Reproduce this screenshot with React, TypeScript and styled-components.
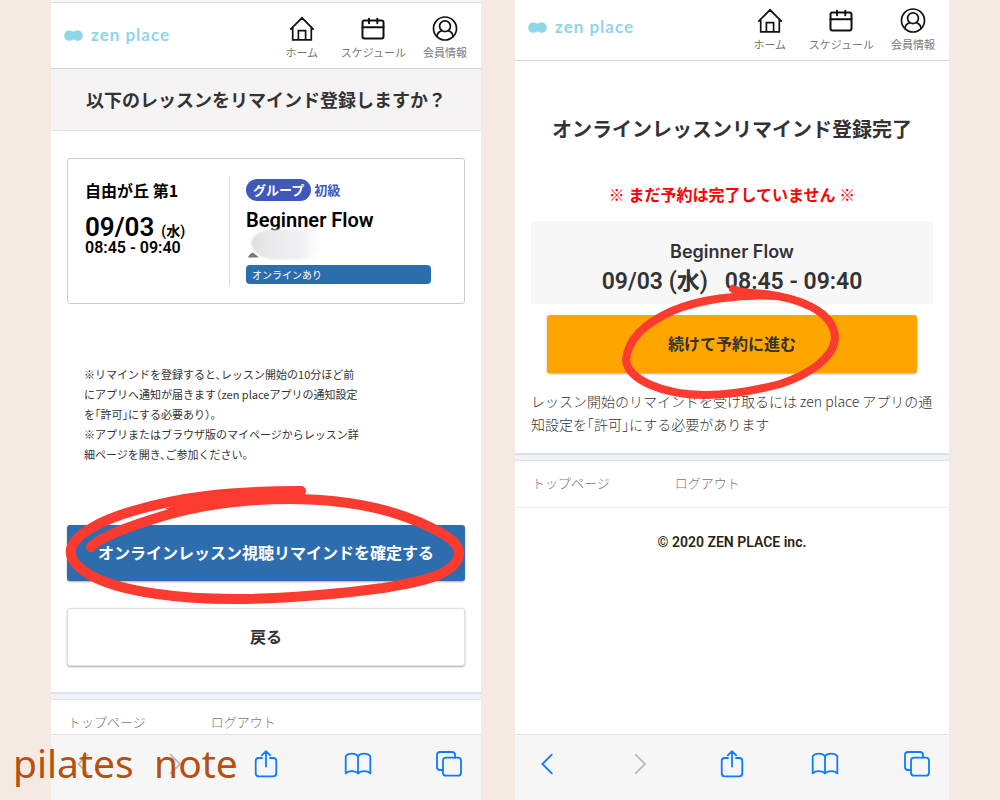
import React from "react";
import styled, { createGlobalStyle } from "styled-components";

const jp = `"Noto Sans CJK JP", sans-serif`;
const latin = `Roboto, "Noto Sans CJK JP", sans-serif`;

const GlobalStyle = createGlobalStyle`
  *, *::before, *::after { box-sizing: border-box; }
  body { margin: 0; background: #f5e9e4; color: #333; font-family: ${jp}; }
  h1, p { margin: 0; }
  a { color: inherit; text-decoration: none; }
  button { font: inherit; cursor: pointer; }
`;

const Page = styled.main`
  position: relative;
  display: grid;
  grid-template-columns: 430fr 434fr;
  gap: 34px;
  min-height: 100vh;
  padding: 0 51px;
`;

const Phone = styled.section`
  display: flex;
  flex-direction: column;
  min-width: 0;
  background: #fff;
`;

const StatusEdge = styled.div`
  height: 3px;
  background: #f7f7f7;
  border-bottom: 1px solid #dcdcdc;
`;

const Header = styled.header<{ $top: number }>`
  display: flex;
  align-items: center;
  justify-content: space-between;
  padding: ${(p) => p.$top}px 14px 8px 13px;
  border-bottom: 1px solid #d3d3d3;
`;

const Logo = styled.a`
  display: flex;
  align-items: center;
  gap: 8px;
  margin-bottom: 6px;
  color: #8fd6e9;
  font: 700 17px/20px Lato, sans-serif;
  letter-spacing: 1px;
`;

const HeaderNav = styled.nav`
  display: flex;
  gap: 17px;
`;

const HeaderLink = styled.a`
  display: flex;
  flex-direction: column;
  align-items: center;
  gap: 2px;
  min-width: 44px;
  color: #777;
  font-size: 11px;
  line-height: 16px;
  white-space: nowrap;
  svg { color: #111; }
`;

const TitleBar = styled.h1`
  padding: 15px 0 16px;
  background: #f5f3f4;
  border-bottom: 1px solid #e1e1ea;
  font-size: 18px;
  line-height: 30px;
  font-weight: 700;
  text-align: center;
  white-space: nowrap;
`;

const Body = styled.div<{ $top: number; $bottom: number }>`
  display: flex;
  flex-direction: column;
  padding: ${(p) => p.$top}px 16px ${(p) => p.$bottom}px;
`;

const Card = styled.article`
  display: grid;
  grid-template-columns: 145px 1fr;
  padding: 17px 33px 17px 17px;
  border: 1px solid #ccc;
  border-radius: 3px;
  color: #000;
`;

const When = styled.div`
  height: 110px;
  border-right: 1px solid #ddd;
  font-family: ${latin};
`;

const Studio = styled.p`
  font: 700 16px/28px ${jp};
`;

const DateLine = styled.p`
  display: flex;
  align-items: flex-end;
  gap: 7px;
  margin-top: 10px;
  font-size: 26px;
  line-height: 26px;
  font-weight: 600;
  small { font-size: 14px; line-height: 18px; }
`;

const TimeLine = styled.p`
  font-size: 16px;
  line-height: 16px;
  font-weight: 600;
`;

const What = styled.div`
  padding: 3px 0 2px 16px;
`;

const Tags = styled.div`
  display: flex;
  align-items: center;
  gap: 3px;
  color: #4058bc;
  font-size: 13px;
  line-height: 22px;
  font-weight: 700;
`;

const Pill = styled.span`
  padding: 0 7px;
  border-radius: 11px;
  background: #4058bc;
  color: #fff;
`;

const LessonName = styled.p`
  margin-top: 5px;
  font: 600 20px/28px ${latin};
`;

const Smudge = styled.svg`
  position: relative;
  display: block;
  margin: -6px 0 3px;
`;

const OnlineBadge = styled.p`
  padding: 0 6px;
  border-radius: 4px;
  background: #2e6dad;
  color: #fff;
  font-size: 10px;
  line-height: 19px;
`;

const Note = styled.p`
  margin: 60px 17px 61px;
  font-size: 11px;
  line-height: 20px;
  font-feature-settings: "halt";
  white-space: nowrap;
`;

const Marked = styled.div<{ $gap: number; $inset: number }>`
  position: relative;
  margin: ${(p) => p.$gap}px ${(p) => p.$inset}px 0;
`;

const tones = {
  primary: "background: #2e6dad; color: #fff; border: 0;",
  plain: "background: #fff; color: #333; border: 1px solid #e2e0dc;",
  accent: "background: #ffa500; color: #333; border: 0;",
};

const Action = styled.button<{ $tone: keyof typeof tones; $gap?: number }>`
  display: block;
  width: 100%;
  margin-top: ${(p) => p.$gap ?? 0}px;
  padding: 15px 0 17px;
  border-radius: 3px;
  box-shadow: 0 1px 2px rgba(60, 50, 30, 0.4);
  ${(p) => tones[p.$tone]}
  && { font-size: 16px; line-height: ${(p) => (p.$tone === "accent" ? 26 : 24)}px; font-weight: 700; }
`;

const WideScribble = styled.svg`
  position: absolute;
  left: -7px;
  top: -45px;
  width: calc(100% + 14px);
  height: 130px;
  pointer-events: none;
`;

const RoundScribble = styled.svg`
  position: absolute;
  left: calc(50% - 110px);
  top: -33px;
  width: 220px;
  height: 120px;
  pointer-events: none;
`;

const DoneTitle = styled.h1`
  font-size: 20px;
  line-height: 30px;
  font-weight: 700;
  text-align: center;
  white-space: nowrap;
`;

const Warning = styled.p`
  margin-top: 38px;
  color: #f00;
  font-size: 16px;
  line-height: 24px;
  font-weight: 700;
  text-align: center;
`;

const Summary = styled.div`
  margin-top: 15px;
  padding: 19px 0 4px;
  background: #f7f7f7;
  text-align: center;
`;

const SummaryName = styled.p`
  font: 600 18px/24px Inter, sans-serif;
`;

const SummaryDate = styled.p`
  height: 36px;
  font: 600 23px/36px ${latin};
  white-space: pre;
`;

const Hint = styled.p`
  margin-top: 17px;
  font-size: 14px;
  line-height: 23px;
  font-weight: 300;
  font-feature-settings: "halt";
  white-space: nowrap;
`;

const Band = styled.div`
  height: 8px;
  background: #eff3f8;
  border-top: 2px solid #dde1ea;
  border-bottom: 1px solid #e2e2dc;
`;

const FooterNav = styled.nav<{ $bottom: number; $line?: boolean }>`
  display: flex;
  gap: 65px;
  padding: 12px 17px ${(p) => p.$bottom}px;
  border-bottom: ${(p) => (p.$line ? "1px solid #eee" : "0")};
  color: #777;
  font-size: 13px;
  line-height: 20px;
  font-weight: 300;
`;

const Copyright = styled.p`
  padding: 24px 0;
  color: #2c1f10;
  font: 600 14px/20px ${latin};
  text-align: center;
`;

const Toolbar = styled.nav`
  display: flex;
  justify-content: space-between;
  margin-top: auto;
  padding: 13px 16px 20px;
  background: #f6f6f6;
  border-top: 1px solid #e2e2e2;
`;

const ToolButton = styled.button`
  display: block;
  width: 32px;
  height: 32px;
  padding: 0;
  border: 0;
  background: none;
  color: #0f7bff;
  &:disabled { color: #bbb; }
  svg { display: block; }
`;

const Watermark = styled.p`
  position: absolute;
  left: 13px;
  bottom: 10px;
  color: #b5500f;
  font: 400 39px/54px "Noto Sans", sans-serif;
  white-space: pre;
`;

const NavIcon = ({ children, width = 1.7 }: { children: React.ReactNode; width?: number }) => (
  <svg width="26" height="26" viewBox="0 0 26 26" fill="none" stroke="currentColor" strokeWidth={width} strokeLinecap="round" strokeLinejoin="round" aria-hidden="true">
    {children}
  </svg>
);

const BarIcon = ({ children }: { children: React.ReactNode }) => (
  <svg width="32" height="32" viewBox="0 0 32 32" fill="none" stroke="currentColor" strokeWidth="1.8" strokeLinecap="round" strokeLinejoin="round" aria-hidden="true">
    {children}
  </svg>
);

function SiteHeader({ top }: { top: number }) {
  return (
    <Header $top={top}>
      <Logo href="#">
        <svg width="19" height="11" viewBox="0 0 19 11" fill="currentColor" aria-hidden="true">
          <circle cx="5.4" cy="5.5" r="5.2" />
          <circle cx="13.6" cy="5.5" r="5.2" />
          <rect x="6" y="1.6" width="7" height="7.8" />
        </svg>
        zen place
      </Logo>
      <HeaderNav>
        <HeaderLink href="#">
          <NavIcon>
            <path d="M1.8 13.2 13 1.8l11.2 11.4M3.7 11.4v12.4h18.6V11.4M9.4 23.8v-9.1h7.2v9.1" strokeLinejoin="miter" />
          </NavIcon>
          ホーム
        </HeaderLink>
        <HeaderLink href="#">
          <NavIcon width={2}>
            <rect x="2.5" y="4.6" width="21" height="17.9" rx="2" />
            <path d="M2.5 11.2h21M9 2.8v4.4M17.3 2.8v4.4" />
          </NavIcon>
          スケジュール
        </HeaderLink>
        <HeaderLink href="#">
          <NavIcon>
            <circle cx="13" cy="12.5" r="11.5" />
            <circle cx="13" cy="10.2" r="5.4" />
            <path d="M4.9 20.4c.4-3 2.3-5 5-5.8M21.1 20.4c-.4-3-2.3-5-5-5.8" />
          </NavIcon>
          会員情報
        </HeaderLink>
      </HeaderNav>
    </Header>
  );
}

function SiteFooter({ bottom, line }: { bottom: number; line?: boolean }) {
  return (
    <>
      <Band />
      <FooterNav $bottom={bottom} $line={line}>
        <a href="#">トップページ</a>
        <a href="#">ログアウト</a>
      </FooterNav>
    </>
  );
}

function BrowserBar({ canGoBack }: { canGoBack?: boolean }) {
  return (
    <Toolbar>
      <ToolButton aria-label="戻る" disabled={!canGoBack}>
        <BarIcon><path d="M20.8 6.6 11.4 16l9.4 9.4" /></BarIcon>
      </ToolButton>
      <ToolButton aria-label="進む" disabled>
        <BarIcon><path d="M11.6 6.6 21 16l-9.4 9.4" /></BarIcon>
      </ToolButton>
      <ToolButton aria-label="共有">
        <BarIcon>
          <path d="M12 10H8.7a3 3 0 0 0-3 3v12.300a3 3 0 0 0 3 3h14.600a3 3 0 0 0 3-3V13a3 3 0 0 0-3-3H20M16 18.500V3.300M11.800 7.300 16 3.100l4.200 4.200" />
        </BarIcon>
      </ToolButton>
      <ToolButton aria-label="ブックマーク">
        <BarIcon>
          <path d="M16 8.300C14.800 6.400 12.400 5.600 9.800 5.600S4.900 6.500 3.700 8.300V25.300C5.200 23.900 7.400 23.200 9.800 23.200s4.900.7 6.200 2.300c1.300-1.600 3.700-2.300 6.200-2.300s4.600.7 6.100 2.100V8.300C27.100 6.500 24.800 5.600 22.200 5.600S17.200 6.400 16 8.300v17" />
        </BarIcon>
      </ToolButton>
      <ToolButton aria-label="タブ">
        <BarIcon>
          <rect x="10" y="9.700" width="18" height="18" rx="3" />
          <path d="M10 22H7a3 3 0 0 1-3-3V7a3 3 0 0 1 3-3h12a3 3 0 0 1 3 3v2.500" />
        </BarIcon>
      </ToolButton>
    </Toolbar>
  );
}

export default function App() {
  return (
    <>
      <GlobalStyle />
      <Page>
        <Phone>
          <StatusEdge />
          <SiteHeader top={13} />
          <TitleBar>以下のレッスンをリマインド登録しますか？</TitleBar>
          <Body $top={27} $bottom={26}>
            <Card>
              <When>
                <Studio>自由が丘 第1</Studio>
                <DateLine>09/03 <small>(水)</small></DateLine>
                <TimeLine>08:45 - 09:40</TimeLine>
              </When>
              <What>
                <Tags><Pill>グループ</Pill>初級</Tags>
                <LessonName>Beginner Flow</LessonName>
                <Smudge width="80" height="34" viewBox="0 0 80 34" aria-hidden="true">
                  <defs>
                    <linearGradient id="smudge" x1="0" y1="0" x2="1" y2="0">
                      <stop offset="0" stopColor="#dedede" />
                      <stop offset="0.25" stopColor="#e9e9eb" />
                      <stop offset="0.7" stopColor="#eff0f3" />
                      <stop offset="1" stopColor="#fff" />
                    </linearGradient>
                    <filter id="soft"><feGaussianBlur stdDeviation="1" /></filter>
                  </defs>
                  <path d="M2 29.500c1-3 3-4 5-5l6 5z" fill="#777" />
                  <path d="M5 15C7 7 14 2 28 1.500h38c8 2 9 8 9 15s-6 15-14 15H26C14 30 7 25 5 15z" fill="url(#smudge)" filter="url(#soft)" />
                </Smudge>
                <OnlineBadge>オンラインあり</OnlineBadge>
              </What>
            </Card>
            <Note>
              ※リマインドを登録すると、レッスン開始の10分ほど前<br />
              にアプリへ通知が届きます（zen placeアプリの通知設定<br />
              を「許可」にする必要あり）。<br />
              ※アプリまたはブラウザ版のマイページからレッスン詳<br />
              細ページを開き、ご参加ください。
            </Note>
            <Marked $gap={0} $inset={0}>
              <Action type="button" $tone="primary">オンラインレッスン視聴リマインドを確定する</Action>
              <WideScribble viewBox="60 480 412 130" preserveAspectRatio="none" aria-hidden="true">
                <path
                  d="M91 547C98 539 122 529 150 520C195 505 240 499 290 499C360 499 410 515 443 534C455 541 460 548 459 555C455 575 420 582 383 588C330 595 280 599 233 599C180 599 125 592 96 578C78 569 69 560 71 549C75 533 105 519 133 511C180 497 230 491 301 491"
                  fill="none" stroke="#fc3b30" strokeWidth="10" strokeLinecap="round" strokeLinejoin="round"
                />
                <path d="M164 509 200 497 300 490 306 498 240 503 190 512Z" fill="#fc3b30" />
              </WideScribble>
            </Marked>
            <Action type="button" $tone="plain" $gap={27}>戻る</Action>
          </Body>
          <SiteFooter bottom={2} />
          <BrowserBar />
        </Phone>

        <Phone>
          <SiteHeader top={8} />
          <Body $top={53} $bottom={17}>
            <DoneTitle>オンラインレッスンリマインド登録完了</DoneTitle>
            <Warning>※ まだ予約は完了していません ※</Warning>
            <Summary>
              <SummaryName>Beginner Flow</SummaryName>
              <SummaryDate>09/03 (水)&nbsp;&nbsp; 08:45 - 09:40</SummaryDate>
            </Summary>
            <Marked $gap={11} $inset={16}>
              <Action type="button" $tone="accent">続けて予約に進む</Action>
              <RoundScribble viewBox="622 282 220 120" aria-hidden="true">
                <path
                  d="M733 289C741 293 752 293 765 294C797 298 834 310 835 338C834 358 808 375 780 384C750 392 730 395 705 395C664 395 628 380 626 360C628 338 645 323 672 311C700 299 740 294 778 296"
                  fill="none" stroke="#fc3b30" strokeWidth="8" strokeLinecap="round" strokeLinejoin="round"
                />
              </RoundScribble>
            </Marked>
            <Hint>
              レッスン開始のリマインドを受け取るには zen place アプリの通<br />
              知設定を「許可」にする必要があります
            </Hint>
          </Body>
          <SiteFooter bottom={14} line />
          <Copyright>© 2020 ZEN PLACE inc.</Copyright>
          <BrowserBar canGoBack />
        </Phone>
        <Watermark>pilates&nbsp; note</Watermark>
      </Page>
    </>
  );
}
